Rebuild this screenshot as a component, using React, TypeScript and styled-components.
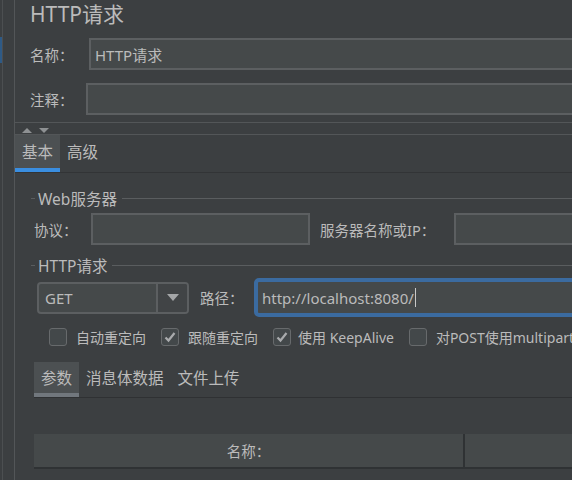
import React from "react";
import styled, { createGlobalStyle } from "styled-components";

const GlobalStyle = createGlobalStyle`
  html, body { margin: 0; padding: 0; background: #3c3f41; overflow: hidden; }
  body {
    font-family: "Noto Sans", "Noto Sans CJK SC", sans-serif;
    color: #bbbbbb;
  }
  * { box-sizing: border-box; }
`;

const Frame = styled.div`
  display: flex;
  width: 572px;
  height: 480px;
  overflow: hidden;
  background: #3c3f41;
`;

const Strip = styled.div`
  flex: none;
  width: 15px;
  display: flex;
`;

const Edge = styled.div`
  width: 2px;
  display: flex;
  flex-direction: column;
`;

const BlueMark = styled.div`
  margin-top: 37px;
  height: 26px;
  width: 2px;
  background: #2e5a86;
`;

const StripBody = styled.div`
  flex: 1;
  border-left: 1px solid #4c4f51;
  border-right: 1px solid #535658;
`;

const Main = styled.div`
  flex: none;
  width: 880px;
  display: flex;
  flex-direction: column;
`;

const TitleBar = styled.div`
  height: 28px;
  padding-left: 15px;
  font-size: 21px;
  line-height: 28px;
  color: #bbbbbb;
`;

const FormRow = styled.div<{ $top: number; $indent: number; $height?: number }>`
  display: flex;
  align-items: center;
  margin-top: ${(p) => p.$top}px;
  padding-left: ${(p) => p.$indent}px;
  height: ${(p) => p.$height ?? 32}px;
`;

const Label = styled.div<{ $width: number; $gap?: number }>`
  flex: none;
  width: ${(p) => p.$width}px;
  margin-left: ${(p) => p.$gap ?? 0}px;
  font-size: 14.5px;
  white-space: nowrap;
  color: #bbbbbb;
`;

const TextField = styled.div<{ $width?: number }>`
  ${(p) => (p.$width ? `width: ${p.$width}px; flex: none;` : "flex: 1;")}
  height: 32px;
  background: #45494a;
  border: 2px solid #5c5f61;
  padding: 0 4px;
  font-size: 15px;
  display: flex;
  align-items: center;
  color: #bbbbbb;
  white-space: nowrap;
`;

const Splitter = styled.div`
  margin-top: 7px;
  height: 13px;
  border-top: 1px solid #535658;
  border-bottom: 1px solid #535658;
  display: flex;
  align-items: center;
  padding-left: 7px;
  gap: 7px;
`;

const UpArrow = styled.div`
  width: 0;
  height: 0;
  border-left: 5px solid transparent;
  border-right: 5px solid transparent;
  border-bottom: 5px solid #8e9193;
  margin-top: 3px;
`;

const DownArrow = styled.div`
  width: 0;
  height: 0;
  border-left: 5px solid transparent;
  border-right: 5px solid transparent;
  border-top: 5px solid #8e9193;
  margin-top: 3px;
`;

const TabBar = styled.div<{ $height: number; $indent?: number; $top?: number; $line: string }>`
  display: flex;
  height: ${(p) => p.$height + 1}px;
  margin-left: ${(p) => p.$indent ?? 0}px;
  margin-top: ${(p) => p.$top ?? 0}px;
  border-bottom: 1px solid ${(p) => p.$line};
`;

const Tab = styled.div<{ $active?: boolean; $accent: string }>`
  display: flex;
  align-items: center;
  padding: 0 7px;
  font-size: 15.5px;
  color: #bbbbbb;
  background: ${(p) => (p.$active ? "#4c5052" : "transparent")};
  border-bottom: 4px solid ${(p) => (p.$active ? p.$accent : "transparent")};
  white-space: nowrap;
`;

const Body = styled.div`
  padding-left: 16px;
  display: flex;
  flex-direction: column;
`;

const GroupHeader = styled.div<{ $top: number }>`
  display: flex;
  align-items: center;
  height: 16px;
  margin-top: ${(p) => p.$top}px;
`;

const Tick = styled.div`
  width: 4px;
  height: 1px;
  background: #5a5d5f;
`;

const GroupLine = styled.div`
  flex: 1;
  height: 1px;
  background: #5a5d5f;
`;

const GroupTitle = styled.div`
  padding: 0 5px 0 3px;
  font-size: 15.5px;
  color: #bbbbbb;
  white-space: nowrap;
`;

const Combo = styled.div`
  flex: none;
  width: 152px;
  height: 32px;
  display: flex;
  border: 2px solid #5c5f61;
  border-radius: 4px;
  background: #45494a;
  overflow: hidden;
`;

const ComboValue = styled.div`
  flex: 1;
  display: flex;
  align-items: center;
  padding-left: 6px;
  font-size: 15px;
  color: #bbbbbb;
`;

const ComboButton = styled.div`
  flex: none;
  width: 31px;
  border-left: 2px solid #5c5f61;
  background: #414446;
  display: flex;
  align-items: center;
  justify-content: center;
`;

const ComboArrow = styled.div`
  width: 0;
  height: 0;
  border-left: 6px solid transparent;
  border-right: 6px solid transparent;
  border-top: 7px solid #a4a6a8;
`;

const PathField = styled.div`
  flex: 1;
  height: 39px;
  border: 4px solid #3b6ba0;
  border-radius: 5px;
  background: #45494a;
  padding: 0 4px;
  display: flex;
  align-items: center;
  font-size: 15px;
  color: #bbbbbb;
  white-space: nowrap;
`;

const Caret = styled.span`
  display: inline-block;
  width: 1px;
  height: 19px;
  background: #c8c8c8;
  margin-left: 1px;
`;

const CheckRow = styled.div`
  display: flex;
  align-items: center;
  margin-top: 11px;
  padding-left: 18px;
  height: 18px;
  gap: 15px;
`;

const CheckItem = styled.div<{ $gap?: number }>`
  display: flex;
  align-items: center;
  gap: ${(p) => p.$gap ?? 9}px;
  font-size: 14px;
  color: #bbbbbb;
  white-space: nowrap;
`;

const Box = styled.div`
  width: 18px;
  height: 18px;
  border: 1px solid #676a6c;
  border-radius: 3px;
  background: #43484a;
  display: flex;
  align-items: center;
  justify-content: center;
`;

const Table = styled.div`
  margin-top: 36px;
  margin-left: 3px;
  display: flex;
  height: 35px;
  background: #45494a;
  border-bottom: 2px solid #2f3234;
`;

const HeaderCell = styled.div<{ $width?: number }>`
  ${(p) => (p.$width ? `width: ${p.$width}px; flex: none; border-right: 2px solid #2f3234;` : "flex: 1;")}
  display: flex;
  align-items: center;
  justify-content: center;
  font-size: 14.5px;
  color: #bbbbbb;
`;

const Check: React.FC<{ checked?: boolean; label: string; gap?: number }> = ({ checked, label, gap }) => (
  <CheckItem $gap={gap}>
    <Box>
      {checked && (
        <svg width="14" height="14" viewBox="0 0 14 14">
          <path d="M2.5 7.5 L5.5 10.5 L11.5 3" fill="none" stroke="#a9abad" strokeWidth="2.2" />
        </svg>
      )}
    </Box>
    {label}
  </CheckItem>
);

export default function App() {
  return (
    <>
      <GlobalStyle />
      <Frame>
        <Strip>
          <Edge>
            <BlueMark />
          </Edge>
          <StripBody />
        </Strip>
        <Main>
          <TitleBar>HTTP请求</TitleBar>
          <FormRow $top={10} $indent={15}>
            <Label $width={59}>名称：</Label>
            <TextField>HTTP请求</TextField>
          </FormRow>
          <FormRow $top={13} $indent={15}>
            <Label $width={56}>注释：</Label>
            <TextField />
          </FormRow>
          <Splitter>
            <UpArrow />
            <DownArrow />
          </Splitter>
          <TabBar $height={37} $line="#323436">
            <Tab $active $accent="#3a8ee0">基本</Tab>
            <Tab $accent="#3a8ee0">高级</Tab>
          </TabBar>
          <Body>
            <GroupHeader $top={17}>
              <Tick />
              <GroupTitle>Web服务器</GroupTitle>
              <GroupLine />
            </GroupHeader>
            <FormRow $top={7} $indent={3}>
              <Label $width={57}>协议：</Label>
              <TextField $width={219} />
              <Label $width={134} $gap={10}>服务器名称或IP：</Label>
              <TextField />
            </FormRow>
            <GroupHeader $top={12}>
              <Tick />
              <GroupTitle>HTTP请求</GroupTitle>
              <GroupLine />
            </GroupHeader>
            <FormRow $top={5} $indent={6} $height={39}>
              <Combo>
                <ComboValue>GET</ComboValue>
                <ComboButton>
                  <ComboArrow />
                </ComboButton>
              </Combo>
              <Label $width={54} $gap={11}>路径：</Label>
              <PathField>
                http://localhost:8080/
                <Caret />
              </PathField>
            </FormRow>
            <CheckRow>
              <Check label="自动重定向" />
              <Check checked label="跟随重定向" />
              <Check checked gap={7} label="使用 KeepAlive" />
              <Check label="对POST使用multipart / form-data" />
            </CheckRow>
            <TabBar $height={35} $indent={3} $top={16} $line="#2f3133">
              <Tab $active $accent="#71777d">参数</Tab>
              <Tab $accent="#71777d">消息体数据</Tab>
              <Tab $accent="#71777d">文件上传</Tab>
            </TabBar>
            <Table>
              <HeaderCell $width={431}>名称：</HeaderCell>
              <HeaderCell />
            </Table>
          </Body>
        </Main>
      </Frame>
    </>
  );
}
